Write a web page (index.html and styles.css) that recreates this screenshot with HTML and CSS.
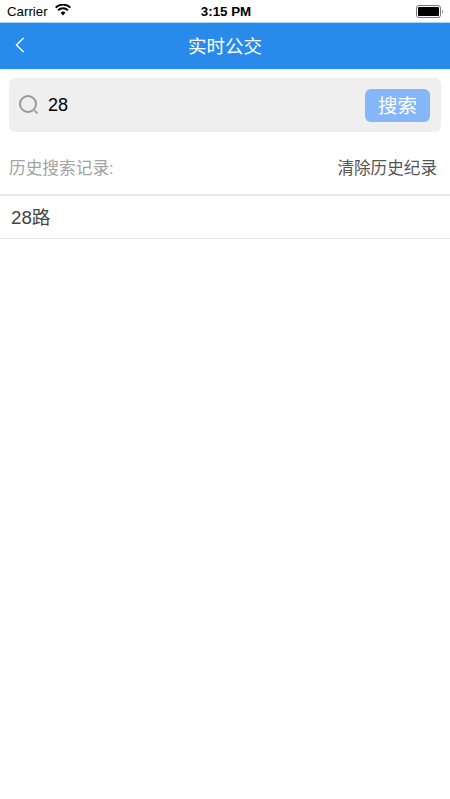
FILE: index.html
```html
<!DOCTYPE html>
<html lang="zh-CN">
<head>
  <meta charset="UTF-8">
  <title>实时公交</title>
  <link rel="stylesheet" href="styles.css">
</head>
<body>

<!-- Status bar -->
<div class="status-bar">
  <div class="status-left">
    <span class="carrier">Carrier</span>
    <svg class="wifi" width="16" height="12" viewBox="0 0 16 12">
      <path d="M8 11.5 5.6 8.8a3.4 3.4 0 0 1 4.8 0z" fill="#000"/>
      <path d="M3.7 6.9a6.1 6.1 0 0 1 8.6 0l1.3-1.4a8 8 0 0 0-11.2 0z" fill="#000"/>
      <path d="M1.3 4.3a9.6 9.6 0 0 1 13.4 0L16 2.9a11.6 11.6 0 0 0-16 0z" fill="#000"/>
    </svg>
  </div>
  <span class="clock">3:15 PM</span>
  <div class="battery">
    <div class="battery-body"><div class="battery-level"></div></div>
    <div class="battery-cap"></div>
  </div>
</div>

<!-- Nav bar -->
<div class="nav-bar">
  <svg class="back" width="10" height="16" viewBox="0 0 10 16">
    <path d="M8.6 1 1.4 8l7.2 7" fill="none" stroke="#fff" stroke-width="1.3"/>
  </svg>
  <span class="nav-title">实时公交</span>
</div>

<!-- Search box -->
<div class="search-box">
  <svg class="search-icon" width="20" height="20" viewBox="0 0 20 20">
    <circle cx="9" cy="9" r="8" fill="none" stroke="#999" stroke-width="2"/>
    <path d="M15.6 15.6 18.4 18.4" fill="none" stroke="#999" stroke-width="2"/>
  </svg>
  <span class="search-text">28</span>
  <button class="search-btn">搜索</button>
</div>

<!-- History -->
<div class="history-head">
  <span class="history-label">历史搜索记录:</span>
  <span class="history-clear">清除历史纪录</span>
</div>
<div class="history-row">28路</div>

</body>
</html>
```

FILE: styles.css
```css
/* Page */
body {
  margin: 0;
  background: #fff;
  font-family: "Liberation Sans", "Noto Sans CJK SC", sans-serif;
}

/* Status bar */
.status-bar {
  height: 22px;
  padding: 0 7px;
  display: flex;
  justify-content: space-between;
  align-items: center;
  color: #000;
  position: relative;
}

.status-left {
  display: flex;
  align-items: center;
  gap: 7px;
}

.carrier {
  font-size: 13.3px;
}

.wifi {
  margin-top: -3px;
}

.clock {
  font-size: 13.3px;
  font-weight: bold;
  position: absolute;
  left: 2px;
  right: 0;
  text-align: center;
}

.battery {
  display: flex;
  align-items: center;
}

.battery-body {
  width: 21px;
  height: 9px;
  padding: 1px;
  border: 1px solid #777;
  border-radius: 3px;
}

.battery-level {
  height: 100%;
  background: #000;
  border-radius: 1px;
}

.battery-cap {
  width: 1px;
  height: 3px;
  margin-left: 1px;
  background: #999;
}

/* Nav bar */
.nav-bar {
  height: 46px;
  background: #288bec;
  border-top: 1px solid #a9d8fb;
  border-bottom: 1px solid #d2f3ff;
  display: flex;
  align-items: center;
  justify-content: center;
  position: relative;
}

.back {
  position: absolute;
  left: 15px;
  top: 14px;
}

.nav-title {
  color: #fff;
  font-size: 18.5px;
  margin-top: -3px;
}

/* Search box */
.search-box {
  height: 54px;
  margin: 8px 9px 0;
  padding: 0 11px 0 10px;
  background: #efefef;
  border-radius: 6px;
  display: flex;
  align-items: center;
}

.search-icon {
  flex: none;
}

.search-text {
  flex: 1;
  margin-left: 9px;
  font-size: 18px;
  color: #000;
}

.search-btn {
  width: 65px;
  height: 33px;
  padding: 0 0 2px;
  border: none;
  border-radius: 6px;
  background: #85b6f7;
  color: #fff;
  font-family: inherit;
  font-size: 19.5px;
}

/* History */
.history-head {
  height: 55px;
  padding: 6px 13px 0 9px;
  display: flex;
  justify-content: space-between;
  align-items: center;
  border-bottom: 2px solid #e8e8e8;
  margin-top: 1px;
}

.history-label {
  font-size: 16.7px;
  color: #a3a3a3;
}

.history-clear {
  font-size: 16.6px;
  color: #555;
}

.history-row {
  height: 42px;
  line-height: 43px;
  padding-left: 11px;
  font-size: 18.7px;
  color: #444;
  border-bottom: 1px solid #e8e8e8;
}
```
